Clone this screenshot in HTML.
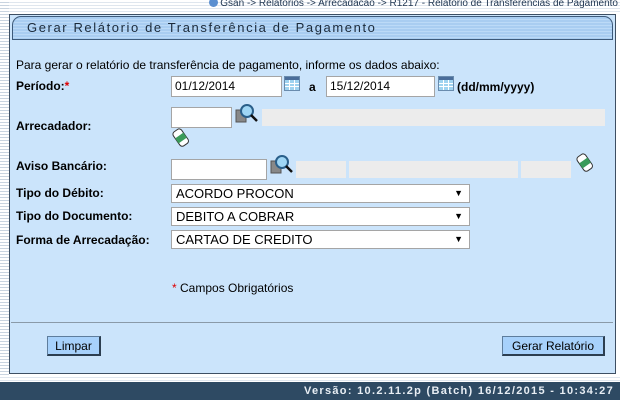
<!DOCTYPE html>
<html><head><meta charset="utf-8"><style>
*{margin:0;padding:0;box-sizing:border-box}
body{width:620px;height:400px;overflow:hidden;background:#fff;font-family:"Liberation Sans",Arial,sans-serif;font-size:12px;color:#000;position:relative}
.a{position:absolute}
.stripes{background:repeating-linear-gradient(#fff 0 2px,#dfe6ee 2px 3px)}
.panel{left:9px;top:14px;width:607px;height:360px;background:#cbe4fb;border:1px solid #3d4f63}
.hdr{left:12px;top:16px;width:601px;height:24px;border:1px solid #3d5a7a;border-radius:9px 9px 0 0;background:repeating-linear-gradient(#a9cdf1 0 2px,#bcdaf7 2px 3px);font-size:13px;letter-spacing:1.6px;color:#1b2a3a;padding:3px 0 0 14px}
.inp{background:#fff;border:1px solid #a5a5a5;font-size:12px;padding:2px 3px}
.gray{background:#ececec}
.sel{background:#fff;border:1px solid #a5a5a5;font-size:13px;padding:1px 4px;width:299px;height:19px}
.sel:after{content:"▼";position:absolute;right:6px;top:3px;font-size:9px}
.lbl{font-weight:bold;font-size:12px}
.btn{background:#a7d1fb;border:1px solid #5e7d9c;border-right:2px solid #2c3e50;border-bottom:2px solid #2c3e50;font-size:12px;padding:2px 5px;height:20px;text-align:center}
</style></head><body>
<div class="a stripes" style="left:0;top:0;width:620px;height:14px"></div>
<div class="a stripes" style="left:0;top:0;width:9px;height:380px;background:repeating-linear-gradient(#fff 0 2px,#c9d4e0 2px 3px)"></div>
<div class="a" style="right:2px;top:-2px;font-size:10px;color:#1f3550">
<span style="display:inline-block;width:9px;height:9px;border-radius:50%;background:#5b8fd0;vertical-align:-1px"></span> Gsan -&gt; Relatorios -&gt; Arrecadacao -&gt; R1217 - Relatorio de Transferencias de Pagamento</div>
<div class="a panel"></div>
<div class="a hdr">Gerar Relátorio de Transferência de Pagamento</div>

<div class="a" style="left:16px;top:58px">Para gerar o relatório de transferência de pagamento, informe os dados abaixo:</div>
<div class="a lbl" style="left:16px;top:79px">Período:<span style="color:#d00">*</span></div>
<div class="a inp" style="left:171px;top:76px;width:111px;height:21px">01/12/2014</div>
<svg class="a" style="left:284px;top:76px" width="16" height="15"><rect x="0.5" y="0.5" width="15" height="14" fill="#9fd3f0" stroke="#6a8cae"/><rect x="1" y="1" width="14" height="3" fill="#4a6d9a"/><path d="M1 7.5h14M1 10.5h14M5.5 4v10M10.5 4v10" stroke="#fff"/></svg>
<div class="a lbl" style="left:309px;top:80px">a</div>
<div class="a inp" style="left:326px;top:76px;width:109px;height:21px">15/12/2014</div>
<svg class="a" style="left:438px;top:76px" width="16" height="15"><rect x="0.5" y="0.5" width="15" height="14" fill="#9fd3f0" stroke="#6a8cae"/><rect x="1" y="1" width="14" height="3" fill="#4a6d9a"/><path d="M1 7.5h14M1 10.5h14M5.5 4v10M10.5 4v10" stroke="#fff"/></svg>
<div class="a lbl" style="left:457px;top:80px">(dd/mm/yyyy)</div>

<div class="a lbl" style="left:16px;top:119px">Arrecadador:</div>
<div class="a inp" style="left:171px;top:107px;width:61px;height:21px"></div>
<svg class="a" style="left:235px;top:102px" width="24" height="22"><rect x="1" y="8" width="10" height="12" fill="#888" stroke="#555"/><circle cx="12" cy="9" r="6" fill="#9fd6f5" stroke="#2a5f8a" stroke-width="2"/><path d="M16 13l6 6" stroke="#111" stroke-width="2.5"/></svg>
<div class="a gray" style="left:262px;top:109px;width:343px;height:17px"></div>
<svg class="a" style="left:172px;top:128px" width="18" height="19"><g transform="rotate(-35 9 10)"><rect x="4" y="1" width="10" height="17" rx="3" fill="#fff" stroke="#333"/><rect x="4" y="7" width="10" height="6" fill="#3a9b5a"/></g></svg>

<div class="a lbl" style="left:16px;top:159px">Aviso Bancário:</div>
<div class="a inp" style="left:171px;top:159px;width:96px;height:21px"></div>
<svg class="a" style="left:270px;top:153px" width="24" height="22"><rect x="1" y="8" width="10" height="12" fill="#888" stroke="#555"/><circle cx="12" cy="9" r="6" fill="#9fd6f5" stroke="#2a5f8a" stroke-width="2"/><path d="M16 13l6 6" stroke="#111" stroke-width="2.5"/></svg>
<div class="a gray" style="left:296px;top:161px;width:50px;height:17px"></div>
<div class="a gray" style="left:349px;top:161px;width:169px;height:17px"></div>
<div class="a gray" style="left:521px;top:161px;width:50px;height:17px"></div>
<svg class="a" style="left:576px;top:153px" width="18" height="19"><g transform="rotate(-35 9 10)"><rect x="4" y="1" width="10" height="17" rx="3" fill="#fff" stroke="#333"/><rect x="4" y="7" width="10" height="6" fill="#3a9b5a"/></g></svg>

<div class="a lbl" style="left:16px;top:186px">Tipo do Débito:</div>
<div class="a sel" style="left:171px;top:184px">ACORDO PROCON</div>
<div class="a lbl" style="left:16px;top:209px">Tipo do Documento:</div>
<div class="a sel" style="left:171px;top:207px">DEBITO A COBRAR</div>
<div class="a lbl" style="left:16px;top:233px">Forma de Arrecadação:</div>
<div class="a sel" style="left:171px;top:230px">CARTAO DE CREDITO</div>

<div class="a" style="left:172px;top:281px"><span style="color:#d00">*</span> Campos Obrigatórios</div>
<div class="a" style="left:11px;top:322px;width:602px;height:1px;background:#8a9aa8"></div>
<div class="a btn" style="left:47px;top:336px;width:54px">Limpar</div>
<div class="a btn" style="left:502px;top:336px;width:103px">Gerar Relatório</div>

<div class="a stripes" style="left:0;top:375px;width:620px;height:7px"></div>
<div class="a" style="left:0;top:382px;width:620px;height:18px;background:#2e4a63;color:#e8eef4;font-weight:bold;font-size:11px;letter-spacing:1.3px;text-align:right;padding:3px 6px 0 0">Versão: 10.2.11.2p (Batch) 16/12/2015 - 10:34:27</div>
</body></html>
